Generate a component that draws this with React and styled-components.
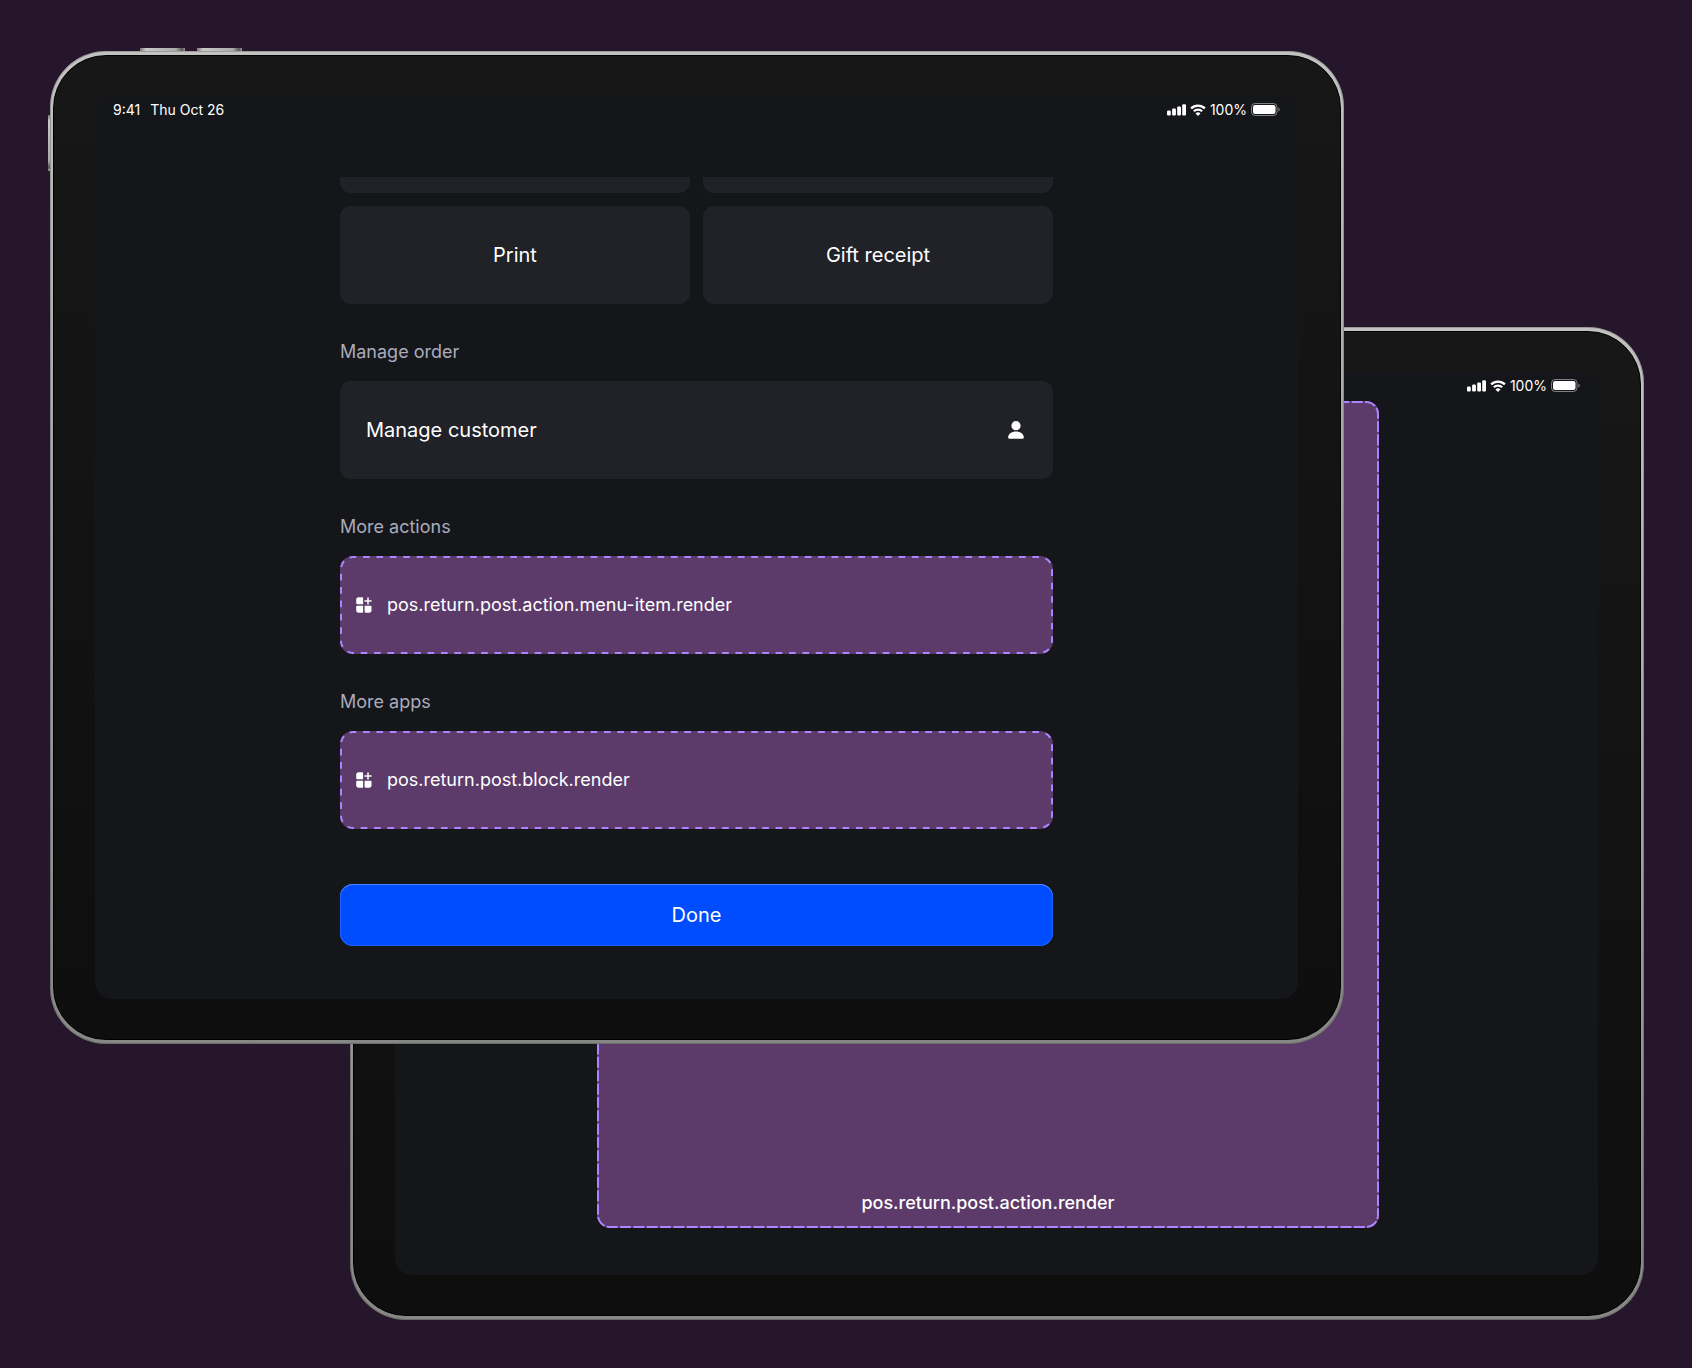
import React from 'react';
import styled, { createGlobalStyle } from 'styled-components'

const Tablet = ({ area, children }) => {
    return (
      <Frame $area={area}>
          <TopKey $left="90px" />
          <TopKey $left="147px" />
          <SideKey />
          <Bezel>
            <Screen>{children}</Screen>
          </Bezel>
      </Frame>
    );
}

const StatusBar = () => {
    return (
      <Status>
          <StatusLeft>
            <span>9:41</span>
            <span>Thu Oct 26</span>
          </StatusLeft>
          <StatusRight>
            <SignalIcon />
            <WifiIcon />
            <span>100%</span>
            <BatteryIcon />
          </StatusRight>
      </Status>
    );
}

const SignalIcon = () => (
    <svg width="19" height="12" viewBox="0 0 19 12" fill="#fff" aria-hidden="true">
      <rect x="0" y="6.6" width="3.8" height="5" rx="1.1" />
      <rect x="5.1" y="4.6" width="3.8" height="7" rx="1.1" />
      <rect x="10.2" y="2.4" width="3.8" height="9.2" rx="1.1" />
      <rect x="15.2" y="0.2" width="3.8" height="11.4" rx="1.1" />
    </svg>
);

const WifiIcon = () => (
    <svg width="16" height="12" viewBox="0 0 16 12" aria-hidden="true">
      <path d="M1.1 4.4a9.8 9.8 0 0 1 13.8 0" fill="none" stroke="#fff" strokeWidth="2.3" />
      <path d="M3.8 7.3a6 6 0 0 1 8.4 0" fill="none" stroke="#fff" strokeWidth="2.2" />
      <path d="M8 12 5.5 9.5a3.6 3.6 0 0 1 5 0z" fill="#fff" />
    </svg>
);

const BatteryIcon = () => (
    <svg width="29" height="13" viewBox="0 0 29 13" aria-hidden="true">
      <rect x="0.5" y="0.5" width="25.5" height="12" rx="3.6" fill="none" stroke="#fff" strokeOpacity="0.45" />
      <rect x="2" y="2" width="22.5" height="9" rx="2.2" fill="#fff" />
      <path d="M27.4 4.4v4.2a2.3 2.3 0 0 0 0-4.2z" fill="#fff" fillOpacity="0.45" />
    </svg>
);

const PersonIcon = () => (
    <svg width="16" height="18" viewBox="0 0 16 18" fill="#fff" aria-hidden="true">
      <circle cx="8" cy="4.7" r="4.6" />
      <path d="M0.2 16.2C0.2 13 3.7 10.6 8 10.6s7.8 2.4 7.8 5.6c0 1-.6 1.5-1.5 1.5H1.7c-.9 0-1.5-.5-1.5-1.5z" />
    </svg>
);

const AppsIcon = () => (
    <svg width="16" height="16" viewBox="0 0 16 16" fill="#fff" aria-hidden="true">
      <path d="M2.6 0.3h3.3c.8 0 1.2.4 1.2 1.2v5.7H1.3C.7 7.2.2 6.7.2 6V2.7C.2 1.2 1.1.3 2.6.3z" />
      <path d="M1.4 8.7h5.7v7H2.6C1.1 15.7.2 14.8.2 13.3V9.9c0-.8.4-1.2 1.2-1.2z" />
      <path d="M8.6 8.7h5.7c.8 0 1.2.4 1.2 1.2v3.4c0 1.5-.9 2.4-2.4 2.4H9.8c-.8 0-1.2-.4-1.2-1.2z" />
      <path d="M12 0.9v6M9 3.9h6" stroke="#fff" strokeWidth="1.5" strokeLinecap="round" />
    </svg>
);

// pathLength is the number of dashes, so they stay even at every width
const DashedOutline = ({ count, dash, round }) => (
    <Outline aria-hidden="true">
      <OutlineRect
        x="1"
        y="1"
        rx="12"
        pathLength={count}
        strokeDasharray={`${dash} ${1 - dash}`}
        strokeDashoffset={dash / 2}
        strokeLinecap={round ? 'round' : 'butt'}
      />
    </Outline>
);

const TargetItem = ({ children }) => (
    <Target>
      <DashedOutline count={119} dash={0.5} />
      <AppsIcon />
      <span>{children}</span>
    </Target>
);

const App = () => {
    return (
      <React.Fragment>
          <GlobalStyle />
          <Stage>
            <Tablet area="2 / 2 / 4 / 4">
              <StatusBar />
              <ModalArea>
                <ModalTarget>
                  <DashedOutline count={239} dash={0.72} round />
                  <span>pos.return.post.action.render</span>
                </ModalTarget>
              </ModalArea>
            </Tablet>

            <Tablet area="1 / 1 / 3 / 3">
              <StatusBar />
              <Content>
                <CardGrid>
                  <CardEnd />
                  <CardEnd />
                  <Card type="button">Print</Card>
                  <Card type="button">Gift receipt</Card>
                </CardGrid>
                <Heading>Manage order</Heading>
                <RowCard type="button">
                  Manage customer
                  <PersonIcon />
                </RowCard>
                <Heading>More actions</Heading>
                <TargetItem>pos.return.post.action.menu-item.render</TargetItem>
                <Heading>More apps</Heading>
                <TargetItem>pos.return.post.block.render</TargetItem>
                <Done type="button">Done</Done>
              </Content>
            </Tablet>
          </Stage>
      </React.Fragment>
    );
}

const GlobalStyle = createGlobalStyle`
    * {
      box-sizing : border-box;
    }
    body {
      margin : 0;
      background : #25162b;
      font-family : Inter, "Liberation Sans", sans-serif;
      color : #fff;
    }
    svg {
      flex : none;
    }
`;

const Stage = styled.main`
    display : grid;
    grid-template-columns : 300px minmax(0, 1fr) 300px;
    grid-template-rows : 276px auto 276px;
    padding : 51px 48px 48px 50px;
`;

const Frame = styled.section`
    position : relative;
    grid-area : ${(props) => props.$area};
    display : flex;
    padding : 4px 3px;
    border-radius : 56px;
    background : linear-gradient(#c2c2c0, #a2a2a2 50%, #858784);
    box-shadow : inset 0 0 0 1px rgba(0, 0, 0, .2);
`;

const TopKey = styled.div`
    position : absolute;
    top : -3px;
    left : ${(props) => props.$left};
    width : 45px;
    height : 3px;
    background : linear-gradient(90deg, #777, #c8c8c8 6px, #aaa 36px, #555 42px, #999);
`;

const SideKey = styled.div`
    position : absolute;
    top : 64px;
    left : -2px;
    width : 2px;
    height : 56px;
    background : linear-gradient(#777, #c8c8c8 6px, #aaa 46px, #555 52px, #999);
`;

const Bezel = styled.div`
    flex : 1;
    display : flex;
    padding : 40px 42px 40px 41px;
    border : 1px solid #000;
    border-radius : 53px;
    background : linear-gradient(#171717, #0e0e0e);
`;

const Screen = styled.div`
    flex : 1;
    display : flex;
    flex-direction : column;
    border-radius : 17px;
    background : #15161a;
`;

const Status = styled.header`
    display : flex;
    justify-content : space-between;
    align-items : center;
    height : 29px;
    padding : 0 18px 2px;
    font-size : 14px;
    font-weight : 400;
    line-height : 17px;
`;

const StatusLeft = styled.div`
    display : flex;
    gap : 10px;
`;

const StatusRight = styled.div`
    display : flex;
    align-items : center;
    gap : 4px;
`;

const Content = styled.div`
    display : flex;
    flex-direction : column;
    width : 100%;
    max-width : 713px;
    margin : 52px auto 53px;
`;

const CardGrid = styled.div`
    display : grid;
    grid-template-columns : 1fr 1fr;
    gap : 13px;
`;

const CardEnd = styled.div`
    height : 16px;
    border-radius : 0 0 11px 11px;
    background : #212227;
`;

const Card = styled.button`
    height : 98px;
    border : 0;
    border-radius : 11px;
    background : #212227;
    color : #fff;
    font-family : inherit;
    font-size : 20px;
    font-weight : 400;
    line-height : 24px;
    cursor : pointer;
`;

const RowCard = styled(Card)`
    display : flex;
    align-items : center;
    justify-content : space-between;
    padding : 0 29px 0 26px;
`;

const Heading = styled.h2`
    margin : 36px 0 17px;
    color : #a9abbd;
    font-size : 18px;
    font-weight : 400;
    line-height : 24px;
`;

const Target = styled.div`
    position : relative;
    display : flex;
    align-items : center;
    gap : 15px;
    height : 98px;
    padding : 0 16px;
    border-radius : 13px;
    background : #5c3a6a;
    font-size : 18px;
    font-weight : 400;
    line-height : 24px;
`;

const ModalArea = styled.div`
    flex : 1;
    display : flex;
    padding : 0 219px 47px 202px;
`;

const ModalTarget = styled(Target)`
    flex : 1;
    align-items : flex-end;
    justify-content : center;
    height : auto;
    padding : 0 16px 13px;
    font-weight : 500;
`;

const Outline = styled.svg`
    position : absolute;
    top : 0;
    left : 0;
    width : 100%;
    height : 100%;
`;

const OutlineRect = styled.rect`
    width : calc(100% - 2px);
    height : calc(100% - 2px);
    fill : none;
    stroke : #ab84ff;
    stroke-width : 2px;
`;

const Done = styled(Card)`
    height : 62px;
    margin-top : 55px;
    border-radius : 13px;
    background : #004cff;
    box-shadow : inset 0 1px 0 #4a86ff, inset 0 0 0 1px #1c63ff;
`;

export default App;
